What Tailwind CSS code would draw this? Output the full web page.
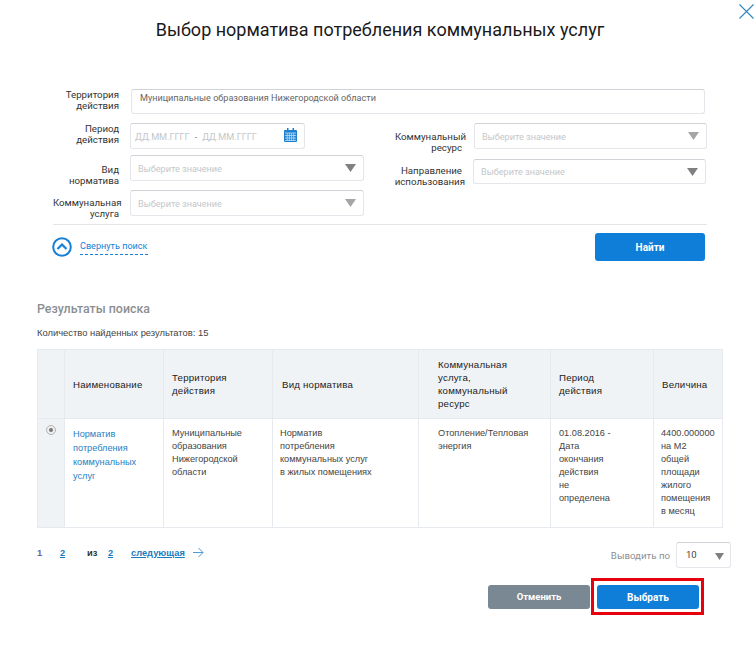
<!DOCTYPE html>
<html lang="ru">
<head>
<meta charset="utf-8">
<script src="https://cdn.jsdelivr.net/npm/@tailwindcss/browser@4"></script>
</head>
<body class="bg-white font-['Roboto',sans-serif] text-[#222]">
<div class="relative w-[756px] h-[650px] overflow-hidden">
  <svg class="absolute left-[739px] top-[4px] w-[15px] h-[15px]" viewBox="0 0 15 15" fill="none" stroke="#2f86bd" stroke-width="1.1"><path d="M0.5 0.5 14.5 14.5M14.5 0.5 0.5 14.5"/></svg>

  <h1 class="pt-[18px] h-[89px] pl-[4px] text-center text-[18px] leading-[24px] font-normal text-[#1a1a1a]">Выбор норматива потребления коммунальных услуг</h1>

  <div class="pl-[53px] w-[707px]">
    <div class="flex h-[34px] items-start">
      <div class="w-[66px] text-right text-[9.7px] leading-[11px] text-[#333]">Территория<br>действия</div>
      <div class="ml-[12px] w-[574px] h-[25px] border border-[#e3e6ea] border-t-[#cfd2d6] rounded-[3px] pl-[8px] pt-[2px] text-[9.1px] leading-[12px] text-[#666]">Муниципальные образования Нижегородской области</div>
    </div>
    <div class="flex h-[32px] items-start">
      <div class="w-[66px] text-right text-[9.7px] leading-[11px] text-[#333]">Период<br>действия</div>
      <div class="ml-[11px] w-[175px] h-[26px] border border-[#e3e6ea] border-t-[#cfd2d6] rounded-[3px] flex items-center pt-[3px] pl-[4px] pr-[7px] text-[9.1px] text-[#c4c7ca]">
        <span>ДД.ММ.ГГГГ</span><span class="ml-[5px] text-[#888]">-</span><span class="ml-[5px]">ДД.ММ.ГГГГ</span>
        <svg class="ml-auto mt-[-5px] w-[13px] h-[14px]" viewBox="0 0 13 14"><rect x="0" y="2" width="13" height="12" rx="1" fill="#1f80d0"/><rect x="3" y="0" width="1.5" height="3" fill="#1f80d0"/><rect x="8.5" y="0" width="1.5" height="3" fill="#1f80d0"/><path d="M1 5h11M1 7.5h11M1 10h11M1 12.5h11M3.2 5v8M5.4 5v8M7.6 5v8M9.8 5v8" stroke="#bcdcf3" stroke-width="0.8"/></svg>
      </div>
      <div class="w-[161px] text-right text-[9.7px] leading-[11px] pt-[8px] mr-[8px] text-[#333] shrink-0"><div>Коммунальный</div><div class="pr-[4px]">ресурс</div></div>
      <div class="w-[233px] h-[26px] border border-[#e3e6ea] border-t-[#cfd2d6] rounded-[3px] flex items-center pt-[3px] pl-[7px] pr-[7px] text-[9.1px] text-[#c4c7ca]">Выберите значение
        <svg class="ml-auto mt-[-3px] w-[11px] h-[8px]" viewBox="0 0 11 8"><path d="M0 0h11L5.5 8z" fill="#a5a5a5"/></svg>
      </div>
    </div>
    <div class="flex h-[35px] items-start">
      <div class="w-[66px] text-right text-[9.7px] leading-[11px] pt-[9px] text-[#333]">Вид<br>норматива</div>
      <div class="ml-[11px] w-[234px] h-[26px] border border-[#e3e6ea] border-t-[#cfd2d6] rounded-[3px] flex items-center pt-[3px] pl-[7px] pr-[7px] text-[9.1px] text-[#c4c7ca]">Выберите значение
        <svg class="ml-auto mt-[-3px] w-[11px] h-[8px]" viewBox="0 0 11 8"><path d="M0 0h11L5.5 8z" fill="#808080"/></svg>
      </div>
      <div class="w-[101px] text-right text-[9.7px] leading-[11px] mr-[8px] mt-[10px] text-[#333] shrink-0"><div class="pr-[3px]">Направление</div><div>использования</div></div>
      <div class="w-[233px] h-[25px] mt-[4px] border border-[#e3e6ea] border-t-[#cfd2d6] rounded-[3px] flex items-center pt-[3px] pl-[7px] pr-[7px] text-[9.1px] text-[#c4c7ca]">Выберите значение
        <svg class="ml-auto mt-[-3px] w-[11px] h-[8px]" viewBox="0 0 11 8"><path d="M0 0h11L5.5 8z" fill="#808080"/></svg>
      </div>
    </div>
    <div class="flex h-[34px] items-start">
      <div class="w-[67px] text-right text-[9.7px] leading-[11px] pt-[7px] text-[#333] shrink-0">Коммунальная<br><span class="pr-[1px]">услуга</span></div>
      <div class="ml-[10px] w-[234px] h-[26px] border border-[#e3e6ea] border-t-[#cfd2d6] rounded-[3px] flex items-center pt-[3px] pl-[7px] pr-[7px] text-[9.1px] text-[#c4c7ca]">Выберите значение
        <svg class="ml-auto mt-[-3px] w-[11px] h-[8px]" viewBox="0 0 11 8"><path d="M0 0h11L5.5 8z" fill="#a5a5a5"/></svg>
      </div>
    </div>
    <div class="border-t border-[#e3e6e8] h-[9px] w-[654px]"></div>
    <div class="flex items-center h-[28px] w-[652px]">
      <svg class="ml-[-1px] w-[20px] h-[20px] mt-[-1px]" viewBox="0 0 20 20" fill="none" stroke="#1680d6"><circle cx="10" cy="10" r="8.8" stroke-width="2"/><path d="M5.5 12 10 7.5 14.5 12" stroke-width="2.2"/></svg>
      <span class="ml-[8px] pb-[2px] border-b border-dashed border-[#1680d6] text-[9.1px] leading-[12px] text-[#1680d6]">Свернуть поиск</span>
      <button class="ml-auto w-[110px] h-[28px] rounded-[3px] bg-[#0f7ed8] text-white text-[10px] font-bold">Найти</button>
    </div>
  </div>

  <h2 class="ml-[37px] mt-[40px] text-[12.4px] leading-[16px] font-medium text-[#8b8f93]">Результаты поиска</h2>
  <p class="ml-[37px] mt-[10px] text-[9.4px] leading-[12px] text-[#444] font-['Liberation_Sans',sans-serif]">Количество найденных результатов: 15</p>

  <table class="ml-[37px] mt-[10px] w-[685px] table-fixed border-collapse font-['Liberation_Sans',sans-serif] text-[9.2px] leading-[13px] text-[#444]">
    <colgroup><col class="w-[27px]"><col class="w-[99px]"><col class="w-[109px]"><col class="w-[146px]"><col class="w-[132px]"><col class="w-[103px]"><col class="w-[69px]"></colgroup>
    <thead class="bg-[#f0f3f6] text-[#222] text-[9.7px]">
      <tr class="h-[69px]">
        <th class="border border-[#e6eaee]"></th>
        <th class="border border-[#e6eaee] pl-[8px] text-left font-medium tracking-[0.2px]">Наименование</th>
        <th class="border border-[#e6eaee] pl-[8px] text-left font-medium tracking-[0.2px]">Территория действия</th>
        <th class="border border-[#e6eaee] pl-[9px] text-left font-medium tracking-[0.2px]">Вид норматива</th>
        <th class="border border-[#e6eaee] pl-[19px] pr-[10px] text-left font-medium tracking-[0.2px]">Коммунальная услуга, коммунальный ресурс</th>
        <th class="border border-[#e6eaee] pl-[8px] pr-[30px] text-left font-medium tracking-[0.2px]">Период действия</th>
        <th class="border border-[#e6eaee] pl-[8px] text-left font-medium tracking-[0.2px]">Величина</th>
      </tr>
    </thead>
    <tbody>
      <tr class="h-[109px] align-top">
        <td class="border border-[#e6eaee] bg-[#f0f3f6] pt-[6px] pl-[8px]"><span class="block w-[10px] h-[10px] rounded-full border border-[#b4b4b4] bg-[#eee] p-[2px]"><span class="block w-[4px] h-[4px] rounded-full bg-[#777]"></span></span></td>
        <td class="border border-[#e6eaee] pl-[8px] pt-[8px] pr-[4px] text-[#1f7fc4] leading-[14px]">Норматив потребления коммунальных услуг</td>
        <td class="border border-[#e6eaee] pl-[8px] pt-[8px] pr-[4px]">Муниципальные образования Нижегородской области</td>
        <td class="border border-[#e6eaee] pl-[7px] pt-[8px] pr-[4px]">Норматив<br>потребления<br>коммунальных услуг<br>в жилых помещениях</td>
        <td class="border border-[#e6eaee] pl-[19px] pt-[8px] pr-[4px]">Отопление/Тепловая<br>энергия</td>
        <td class="border border-[#e6eaee] pl-[8px] pt-[8px] pr-[4px]">01.08.2016 -<br>Дата<br>окончания<br>действия<br>не<br>определена</td>
        <td class="border border-[#e6eaee] pl-[7px] pt-[8px] pr-[1px]">4400.000000<br>на М2<br>общей<br>площади<br>жилого<br>помещения<br>в месяц</td>
      </tr>
    </tbody>
  </table>

  <div class="flex items-start mt-[14px] pl-[37px] pr-[25px] h-[36px] font-['Liberation_Sans',sans-serif] text-[9.3px] font-bold">
    <a class="mt-[5px] w-[23px] text-[#6d64a8]">1</a>
    <a class="mt-[5px] w-[27px] text-[#1a7cc0] underline">2</a>
    <span class="mt-[5px] w-[21px] text-[#333]">из</span>
    <a class="mt-[5px] w-[23px] text-[#1a7cc0] underline">2</a>
    <a class="mt-[5px] text-[#1a7cc0] underline">следующая</a>
    <svg class="ml-[8px] mt-[5px] w-[11px] h-[11px]" viewBox="0 0 11 11" fill="none" stroke="#4d9ad6"><path d="M0 5.5h10M5.5 1 10 5.5 5.5 10"/></svg>
    <span class="ml-auto mt-[7px] font-['Roboto',sans-serif] font-normal text-[9.7px] leading-[13px] text-[#8b8f93]">Выводить по</span>
    <div class="ml-[6px] w-[55px] h-[26px] border border-[#e3e6ea] border-t-[#cfd2d6] rounded-[3px] flex items-center pl-[9px] pr-[6px] font-['Roboto',sans-serif] font-normal text-[9.5px] text-[#444]">10
      <svg class="ml-auto mt-[2px] w-[9px] h-[7px]" viewBox="0 0 9 7"><path d="M0 0h9L4.5 7z" fill="#808080"/></svg>
    </div>
  </div>

  <div class="flex justify-end items-start pr-[52px]">
    <button class="mt-[7px] w-[102px] h-[24px] rounded-[3px] bg-[#7a8894] text-white text-[9.5px] font-bold">Отменить</button>
    <div class="ml-[1px] pt-[4px] pb-[3px] pl-[3px] pr-[2px] border-[3px] border-[#e8000c]"><button class="block w-[102px] h-[24px] rounded-[3px] bg-[#0f7ed8] text-white text-[10px] font-bold">Выбрать</button></div>
  </div>
</div>
</body>
</html>
